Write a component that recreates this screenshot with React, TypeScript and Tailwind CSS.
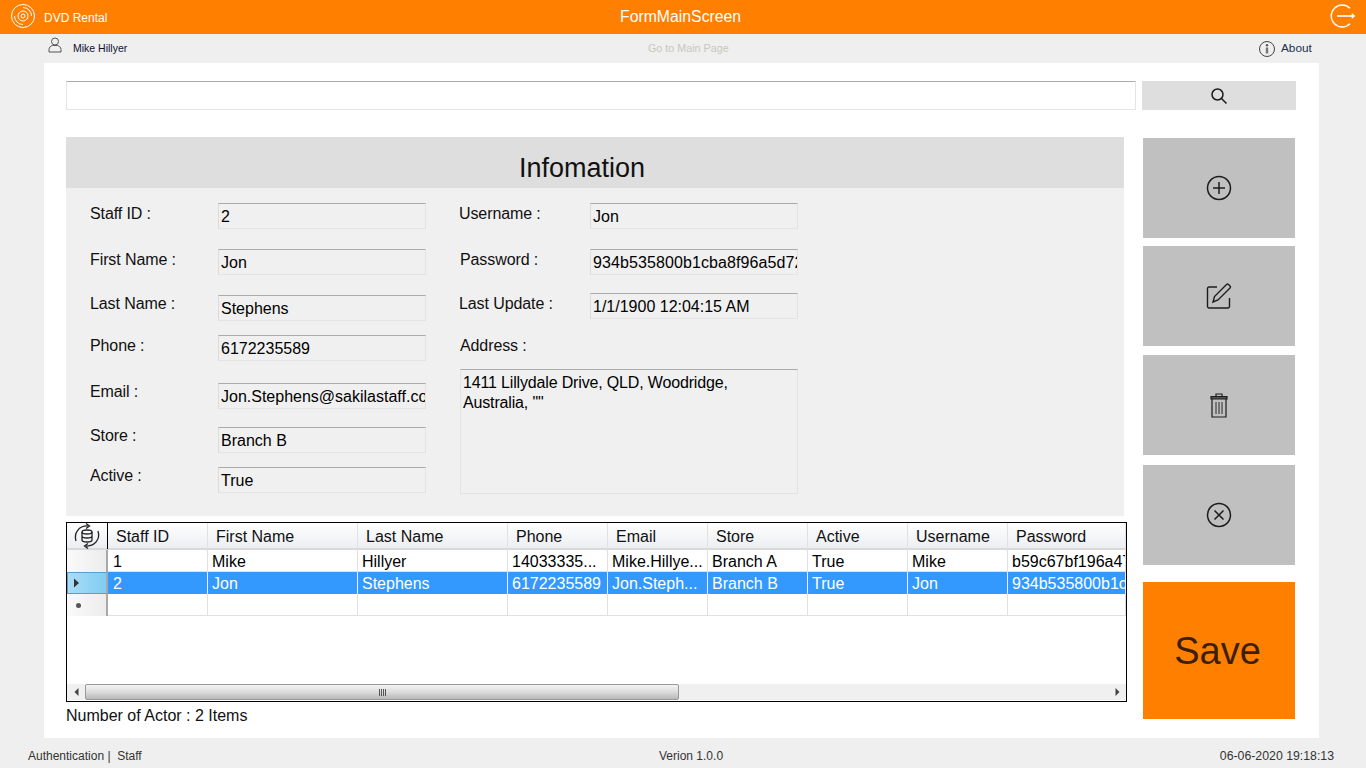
import React from "react";

const font = { fontFamily: '"Liberation Sans", Arial, sans-serif' };

function Box({ value, className = "" }: { value: string; className?: string }) {
  return (
    <div className={"h-[26px] w-[208px] shrink-0 overflow-hidden whitespace-nowrap border border-[#e3e3e3] border-t-[#ababab] border-l-[#dcdcdc] bg-[#f0f0f0] pl-[2px] pt-[2px] text-[16px] leading-[22px] text-black " + className}>
      {value}
    </div>
  );
}

function Row({ label, value, h, lw, top, vc = "" }: { label: string; value: string; h: string; lw: string; top: string; vc?: string }) {
  return (
    <div className={"flex items-start " + h}>
      <div className={"text-[16px] leading-[20px] tracking-[-0.1px] text-[#111] " + lw + " " + top}>{label}</div>
      <Box value={value} className={vc} />
    </div>
  );
}

const IconStroke = "#1c1c1c";

function ActionBtn({ children, className }: { children: React.ReactNode; className: string }) {
  return <div className={"flex w-[152px] items-center justify-center bg-[#c0c0c0] " + className}>{children}</div>;
}

const headers = ["Staff ID", "First Name", "Last Name", "Phone", "Email", "Store", "Active", "Username", "Password"];
const rows = [
  ["1", "Mike", "Hillyer", "14033335...", "Mike.Hillye...", "Branch A", "True", "Mike", "b59c67bf196a4758191e42f76670ceba"],
  ["2", "Jon", "Stephens", "6172235589", "Jon.Steph...", "Branch B", "True", "Jon", "934b535800b1cba8f96a5d72f72f1611"],
  ["", "", "", "", "", "", "", "", ""],
];
const gridCols = "grid grid-cols-[41px_100px_150px_150px_100px_100px_100px_100px_100px_118px]";

export default function App() {
  return (
    <div style={font} className="flex h-screen w-full flex-col overflow-hidden bg-[#efefef]">
      {/* Title bar */}
      <div className="flex h-[34px] shrink-0 items-center bg-[#ff8000] text-white">
        <svg width="26" height="26" viewBox="0 0 26 26" fill="none" stroke="#fff" strokeWidth="1" className="ml-[10px] mt-[-3px]">
          <circle cx="13" cy="13" r="11.500" />
          <circle cx="13" cy="13" r="5" />
          <circle cx="13" cy="13" r="2" />
          <path d="M13 4.500a8.500 8.500 0 0 1 8.500 8.500M13 21.500A8.500 8.500 0 0 1 4.500 13" />
        </svg>
        <div className="ml-[8px] w-[576px] pt-[1px] text-[12px]">DVD Rental</div>
        <div className="w-[122px] whitespace-nowrap text-left text-[15.800px]">FormMainScreen</div>
        <svg width="26" height="26" viewBox="0 0 26 26" fill="none" stroke="#fff" strokeWidth="1.300" className="ml-auto mr-[10px] mt-[-3px]">
          <path d="M20 5.200A11 11 0 1 0 20 20.800" />
          <path d="M7 13h17" strokeWidth="1.600" />
          <path d="M22 10.500l3 2.500-3 2.500z" fill="#fff" strokeWidth="0.500" />
        </svg>
      </div>

      {/* User bar */}
      <div className="flex h-[29px] shrink-0 items-center text-[11px]">
        <svg width="14" height="16" viewBox="0 0 14 16" fill="none" stroke="#555" strokeWidth="1" className="ml-[48px] mt-[-7px]">
          <circle cx="7" cy="4.500" r="3.500" />
          <path d="M1 15v-2.500C1 10 3 9 4.500 8.500h5C11 9 13 10 13 12.500V15z" />
        </svg>
        <div className="ml-[11px] w-[575px] text-[10.500px] text-[#101030]">Mike Hillyer</div>
        <div className="w-[100px] text-[10.750px] text-[#c8c8bc]">Go to Main Page</div>
        <svg width="16" height="16" viewBox="0 0 16 16" fill="none" className="ml-[511px]">
          <circle cx="8" cy="8" r="7.500" stroke="#444" />
          <circle cx="8" cy="4.300" r="1.200" fill="#555" />
          <path d="M6.800 6.500h2.400v6H6.800z" fill="#777" />
        </svg>
        <div className="ml-[6px] text-[11.800px] text-[#203050]">About</div>
      </div>

      {/* Main panel */}
      <div className="ml-[44px] h-[675px] w-[1275px] shrink-0 bg-white pl-[22px] pt-[18px]">
        <div className="flex h-[29px] gap-[6px]">
          <div className="h-[29px] w-[1070px] rounded-[1px] border border-[#e3e3e3] border-t-[#ababab] bg-white" />
          <div className="flex h-[29px] w-[154px] items-center justify-center bg-[#dedede]">
            <svg width="18" height="18" viewBox="0 0 18 18" fill="none" stroke="#1a1a1a" strokeWidth="1.500">
              <circle cx="7.500" cy="7.500" r="5.500" />
              <path d="M11.500 11.500L16.500 16.500" />
            </svg>
          </div>
        </div>

        <div className="mt-[27px] flex">
          {/* Left column */}
          <div className="w-[1077px]">
            <div className="h-[379px] w-[1058px] bg-[#f0f0f0]">
              <div className="flex h-[51px] items-end justify-center bg-[#dedede] pb-[4px] pr-[26px] text-[27px] leading-[32px] text-[#111]">
                Infomation
              </div>
              <div className="flex pt-[15px]">
                <div className="ml-[24px] w-[369px]">
                  <Row label="Staff ID :" value="2" h="h-[46px]" lw="w-[128px]" top="mt-[1px]" />
                  <Row label="First Name :" value="Jon" h="h-[46px]" lw="w-[128px]" top="mt-[1px]" />
                  <Row label="Last Name :" value="Stephens" h="h-[40px]" lw="w-[128px]" top="mt-[-1px]" />
                  <Row label="Phone :" value="6172235589" h="h-[48px]" lw="w-[128px]" top="mt-[1px]" />
                  <Row label="Email :" value="Jon.Stephens@sakilastaff.com" h="h-[44px]" lw="w-[128px]" top="mt-[-1px]" />
                  <Row label="Store :" value="Branch B" h="h-[40px]" lw="w-[128px]" top="mt-[-1px]" />
                  <Row label="Active :" value="True" h="h-[26px]" lw="w-[128px]" top="mt-[-1px]" />
                </div>
                <div className="w-[340px]">
                  <Row label="Username :" value="Jon" h="h-[46px]" lw="w-[131px]" top="mt-[1px]" />
                  <div className="pl-[1px]">
                    <Row label="Password :" value="934b535800b1cba8f96a5d72f72f1611" h="h-[44px]" lw="w-[130px]" top="mt-[1px]" vc="tracking-[0.1px]" />
                  </div>
                  <Row label="Last Update :" value="1/1/1900 12:04:15 AM" h="h-[42px]" lw="w-[131px]" top="mt-[1px]" />
                  <div className="h-[34px] pl-[1px] pt-[1px] text-[16px] leading-[20px] tracking-[-0.1px] text-[#111]">Address :</div>
                  <div className="ml-[1px] h-[125px] w-[338px] border border-[#e3e3e3] border-t-[#ababab] bg-[#f0f0f0] pl-[2px] pt-[3px] text-[16px] leading-[20px] tracking-[-0.16px] text-black">
                    1411 Lillydale Drive, QLD, Woodridge,
                    <br />
                    Australia, ""
                  </div>
                </div>
              </div>
            </div>

            {/* Data grid */}
            <div className="mt-[6px] h-[180px] w-[1061px] overflow-hidden border border-black bg-white">
              <div className={gridCols + " h-[27px] border-b-2 border-[#d8d8d8] bg-gradient-to-b from-white to-[#eceef2]"}>
                <div className="flex items-center justify-center border-r border-black">
                  <svg width="28" height="26" viewBox="0 0 28 26" fill="none" stroke="#222" strokeWidth="1.300">
                    <ellipse cx="14" cy="9" rx="5" ry="2" />
                    <path d="M9 9v8c0 1.200 2.200 2 5 2s5-.8 5-2V9M9 13c0 1.200 2.200 2 5 2s5-.8 5-2" />
                    <path d="M3 18C.5 10 6 2.500 15 3M25 8c2.500 8-3 15.500-12 15" />
                    <path d="M13 0.500l3.500 2.500L13 5.500M15 20.500L11.500 23l3.500 2.500" />
                  </svg>
                </div>
                {headers.map((t) => (
                  <div key={t} className="overflow-hidden border-r border-[#e2e2e2] pl-[8px] pt-[1px] text-[16px] leading-[26px] text-[#111]">
                    {t}
                  </div>
                ))}
              </div>
              {rows.map((r, ri) => {
                const sel = ri === 1;
                return (
                  <div key={ri} className={gridCols + " h-[22px]"}>
                    <div className={"flex items-center border-r-2 border-[#a8a8a8] pl-[5px] " + (sel ? "border-y border-l border-y-[#5a9fc4] border-l-[#5a9fc4] bg-gradient-to-r from-[#a9dcf7] to-[#7fcdf2]" : "bg-gradient-to-r from-[#fafafa] to-[#ececec]")}>
                      {sel && (
                        <svg width="7" height="10" viewBox="0 0 7 10">
                          <path d="M1 0.500L6 5L1 9.500z" fill="#333" />
                        </svg>
                      )}
                      {ri === 2 && <div className="ml-[4px] h-[5px] w-[5px] rounded-full bg-[#555]" />}
                    </div>
                    {r.map((c, ci) => (
                      <div
                        key={ci}
                        className={
                          "h-[22px] overflow-hidden whitespace-nowrap border-r pt-[1px] text-[16px] leading-[22px] " +
                          (ci === 0 ? "pl-[5px] " : "pl-[4px] ") +
                          (sel ? "border-[#e8f2ff] bg-[#3399ff] text-white" : "border-b border-[#e0e0e0] text-black")
                        }
                      >
                        {c}
                      </div>
                    ))}
                  </div>
                );
              })}
              {/* Scrollbar */}
              <div className="mt-[68px] flex h-[16px] items-center bg-[#f0f0f0]">
                <div className="flex w-[18px] items-center justify-center">
                  <svg width="5" height="8" viewBox="0 0 5 8">
                    <path d="M4.500 0L0.500 4L4.500 8z" fill="#444" />
                  </svg>
                </div>
                <div className="flex h-[16px] w-[594px] items-center justify-center rounded-[2px] border border-[#9a9a9a] bg-gradient-to-b from-[#f4f4f4] via-[#dcdcdc] to-[#b8b8b8]">
                  <div className="flex gap-[1px]">
                    <div className="h-[7px] w-[1px] bg-[#555]" />
                    <div className="h-[7px] w-[1px] bg-[#555]" />
                    <div className="h-[7px] w-[1px] bg-[#555]" />
                    <div className="h-[7px] w-[1px] bg-[#555]" />
                  </div>
                </div>
                <div className="ml-auto mr-[6px]">
                  <svg width="5" height="8" viewBox="0 0 5 8">
                    <path d="M0.500 0L4.500 4L0.500 8z" fill="#444" />
                  </svg>
                </div>
              </div>
            </div>
            <div className="mt-[4px] text-[16px] leading-[20px] text-[#111]">Number of Actor : 2 Items</div>
          </div>

          {/* Right column */}
          <div className="flex flex-col">
            <ActionBtn className="mt-[1px] h-[100px]">
              <svg width="26" height="26" viewBox="0 0 26 26" fill="none" stroke={IconStroke} strokeWidth="1.500">
                <circle cx="13" cy="13" r="11.500" />
                <path d="M13 7v12M7 13h12" />
              </svg>
            </ActionBtn>
            <ActionBtn className="mt-[8px] h-[100px]">
              <svg width="26" height="26" viewBox="0 0 26 26" fill="none" stroke={IconStroke} strokeWidth="1.400">
                <path d="M11 4H3a1.500 1.500 0 0 0-1.500 1.500v18A1.500 1.500 0 0 0 3 25h19a1.500 1.500 0 0 0 1.500-1.500V15" />
                <path d="M7 19l1.500-5.500L20.500 1.500a1.500 1.500 0 0 1 2 0l1.500 1.500a1.500 1.500 0 0 1 0 2L12 17z" />
              </svg>
            </ActionBtn>
            <ActionBtn className="mt-[9px] h-[100px]">
              <svg width="18" height="25" viewBox="0 0 18 25" fill="none" stroke={IconStroke} strokeWidth="1.200">
                <path d="M6 3V1h6v2" />
                <path d="M1 3.500h16v2.500H1z" fill="#555" />
                <path d="M2 6v18h14V6" />
                <path d="M6 9v12M9 9v12M12 9v12" stroke="#555" strokeWidth="1.400" />
              </svg>
            </ActionBtn>
            <ActionBtn className="mt-[10px] h-[100px]">
              <svg width="26" height="26" viewBox="0 0 26 26" fill="none" stroke={IconStroke} strokeWidth="1.500">
                <circle cx="13" cy="13" r="11.500" />
                <path d="M8.500 8.500l9 9M17.500 8.500l-9 9" />
              </svg>
            </ActionBtn>
            <div className="mt-[17px] flex h-[137px] w-[152px] items-center justify-center bg-[#ff8000] pr-[3px] pt-[2px] text-[38px] text-[#3c2006]">
              Save
            </div>
          </div>
        </div>
      </div>

      {/* Footer */}
      <div className="flex h-[30px] shrink-0 items-center pt-[6px] text-[12px] text-[#333]">
        <div className="ml-[28px] w-[631px]">Authentication |&nbsp; Staff</div>
        <div className="w-[200px]">Verion 1.0.0</div>
        <div className="ml-auto mr-[32px] text-[12.300px]">06-06-2020 19:18:13</div>
      </div>
    </div>
  );
}
